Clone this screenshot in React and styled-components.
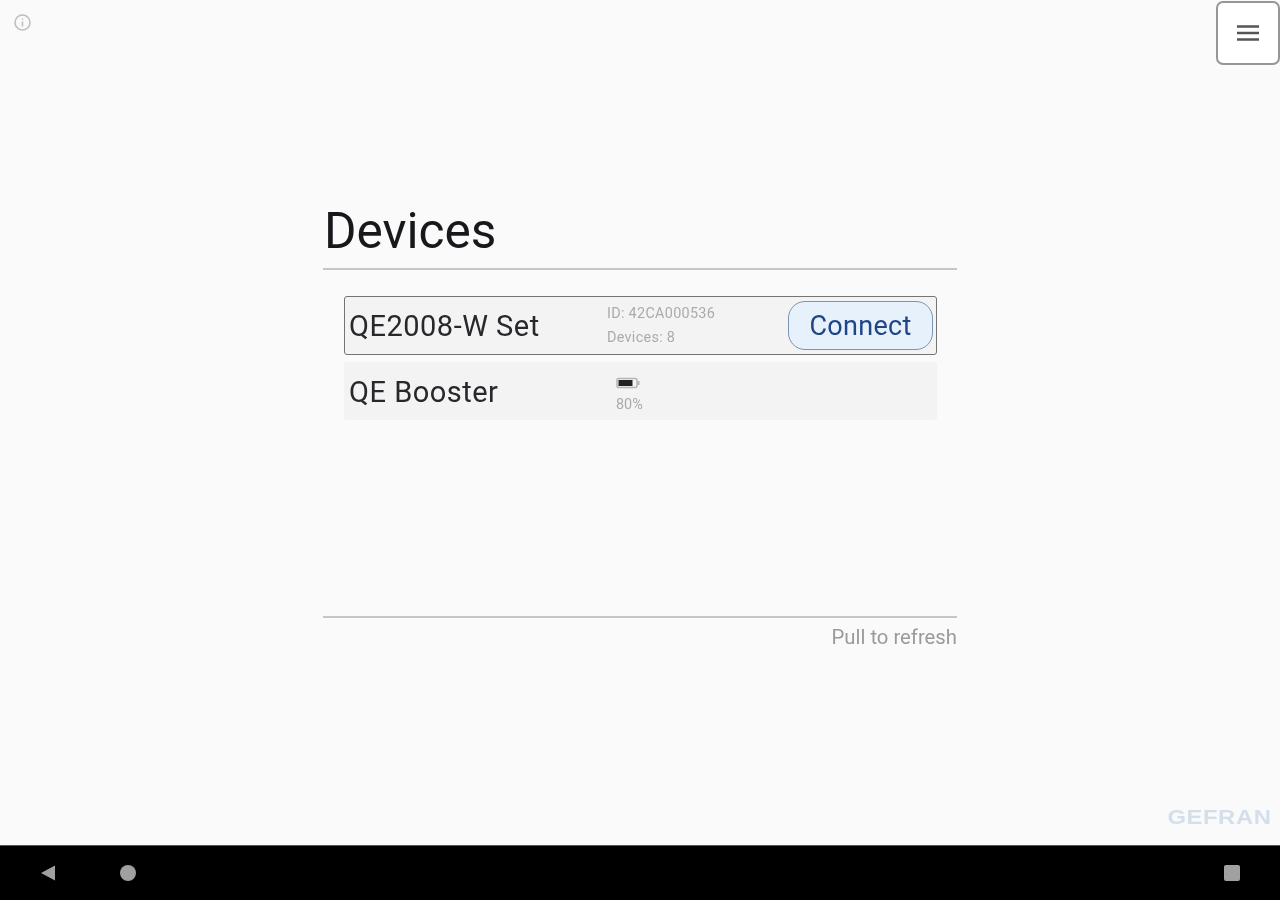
import React from "react";
import styled, { createGlobalStyle } from "styled-components";

const Global = createGlobalStyle`
  html, body {
    margin: 0;
    padding: 0;
    background: #fafafa;
  }
  * {
    box-sizing: border-box;
  }
`;

const Screen = styled.div`
  width: 1280px;
  height: 900px;
  display: flex;
  flex-direction: column;
  overflow: hidden;
  font-family: Roboto, "Liberation Sans", sans-serif;
  background: #fafafa;
  filter: blur(0.45px);
`;

const Main = styled.main`
  position: relative;
  flex: 1;
  display: flex;
  justify-content: center;
  padding-top: 203px;
`;

const InfoIcon = styled.svg`
  position: absolute;
  left: 13px;
  top: 13px;
  width: 19px;
  height: 19px;
`;

const MenuButton = styled.button`
  position: absolute;
  top: 1px;
  right: 0;
  width: 64px;
  height: 64px;
  padding: 0;
  display: flex;
  align-items: center;
  justify-content: center;
  background: #fff;
  border: 2px solid #969696;
  border-radius: 7px;
`;

const Panel = styled.section`
  width: 634px;
  height: 446px;
  display: flex;
  flex-direction: column;
`;

const Title = styled.h1`
  margin: 0;
  height: 65px;
  padding-left: 1px;
  font-size: 49.6px;
  line-height: 57px;
  font-weight: 400;
  color: #16181c;
`;

const Rule = styled.div`
  height: 2px;
  flex-shrink: 0;
  background: #c6c6c6;
`;

const List = styled.div`
  flex: 1;
  display: flex;
  flex-direction: column;
  gap: 7px;
  padding: 26px 20px 0 21px;
`;

const Row = styled.div`
  display: flex;
  align-items: center;
  height: ${({ $selected }) => ($selected ? "59px" : "58px")};
  padding: 0 3px 0 ${({ $selected }) => ($selected ? "4px" : "5px")};
  background: #f3f3f3;
  border: ${({ $selected }) => ($selected ? "1.5px solid #747474" : "none")};
  border-radius: 3px;
`;

const Name = styled.div`
  width: 258px;
  flex-shrink: 0;
  padding-top: ${({ $offset }) => ($offset ? "2px" : "0")};
  font-size: 29px;
  letter-spacing: 0.5px;
  color: #26282b;
  white-space: nowrap;
`;

const Meta = styled.div`
  flex: 1;
  display: flex;
  flex-direction: column;
  gap: 7px;
  font-size: 14.4px;
  line-height: 17px;
  letter-spacing: 0.3px;
  color: #ababab;
`;

const Battery = styled.div`
  display: flex;
  flex-direction: column;
  align-items: flex-start;
  gap: 8px;
  margin: 7px 0 0 9px;
  font-size: 14.4px;
  line-height: 15px;
  color: #ababab;
`;

const ConnectButton = styled.button`
  width: 145px;
  height: 49px;
  padding: 1px 0 0;
  font-family: inherit;
  font-size: 27px;
  letter-spacing: 0.3px;
  color: #1f4488;
  background: #e6f1fc;
  border: 1.5px solid #7d93b2;
  border-radius: 17px;
`;

const Hint = styled.div`
  padding-top: 7px;
  text-align: right;
  font-size: 20.3px;
  line-height: 24px;
  color: #9a9a9a;
`;

const Logo = styled.div`
  position: absolute;
  right: 9px;
  bottom: 18px;
  font-family: "Liberation Sans", sans-serif;
  font-size: 20px;
  line-height: 20px;
  font-weight: 700;
  letter-spacing: 0.5px;
  transform: scaleX(1.19);
  transform-origin: right center;
  color: #d3e0ec;
`;

const NavBar = styled.nav`
  height: 55px;
  flex-shrink: 0;
  display: flex;
  align-items: center;
  padding: 0 40px;
  background: #000;
  border-top: 1px solid #555;
`;

const NavLeft = styled.div`
  flex: 1;
  display: flex;
  align-items: center;
  gap: 64px;
`;

const NavBack = styled.svg`
  width: 16px;
  height: 18px;
`;

const NavHome = styled.div`
  width: 16px;
  height: 16px;
  border-radius: 50%;
  background: #a0a0a0;
`;

const NavRecent = styled.div`
  width: 16px;
  height: 16px;
  border-radius: 2px;
  background: #a0a0a0;
`;

export default function App() {
  return (
    <Screen>
      <Global />
      <Main>
        <InfoIcon viewBox="0 0 19 19" fill="none" stroke="#bdbdbd" strokeWidth="1.5">
          <circle cx="9.5" cy="9.5" r="7.5" />
          <path d="M9.5 8.5v5M9.5 5.5v1.2" />
        </InfoIcon>
        <MenuButton aria-label="Menu">
          <svg width="24" height="18" viewBox="0 0 24 18" stroke="#555" strokeWidth="2.4">
            <path d="M1 2.5h22M1 9h22M1 15.5h22" />
          </svg>
        </MenuButton>
        <Panel>
          <Title>Devices</Title>
          <Rule />
          <List>
            <Row $selected>
              <Name>QE2008-W Set</Name>
              <Meta>
                <span>ID: 42CA000536</span>
                <span>Devices: 8</span>
              </Meta>
              <ConnectButton>Connect</ConnectButton>
            </Row>
            <Row>
              <Name $offset>QE Booster</Name>
              <Battery>
                <svg width="24" height="12" viewBox="0 0 24 12">
                  <rect x="1" y="1.5" width="20" height="9" rx="1.5" fill="none" stroke="#b5b5b5" strokeWidth="1.5" />
                  <rect x="2.5" y="3" width="14" height="6" fill="#222" />
                  <rect x="21.5" y="4" width="2" height="4" fill="#b5b5b5" />
                </svg>
                <span>80%</span>
              </Battery>
            </Row>
          </List>
          <Rule />
          <Hint>Pull to refresh</Hint>
        </Panel>
        <Logo>GEFRAN</Logo>
      </Main>
      <NavBar>
        <NavLeft>
          <NavBack viewBox="0 0 16 18">
            <path d="M1 9 15 1.5v15z" fill="#a0a0a0" />
          </NavBack>
          <NavHome />
        </NavLeft>
        <NavRecent />
      </NavBar>
    </Screen>
  );
}
